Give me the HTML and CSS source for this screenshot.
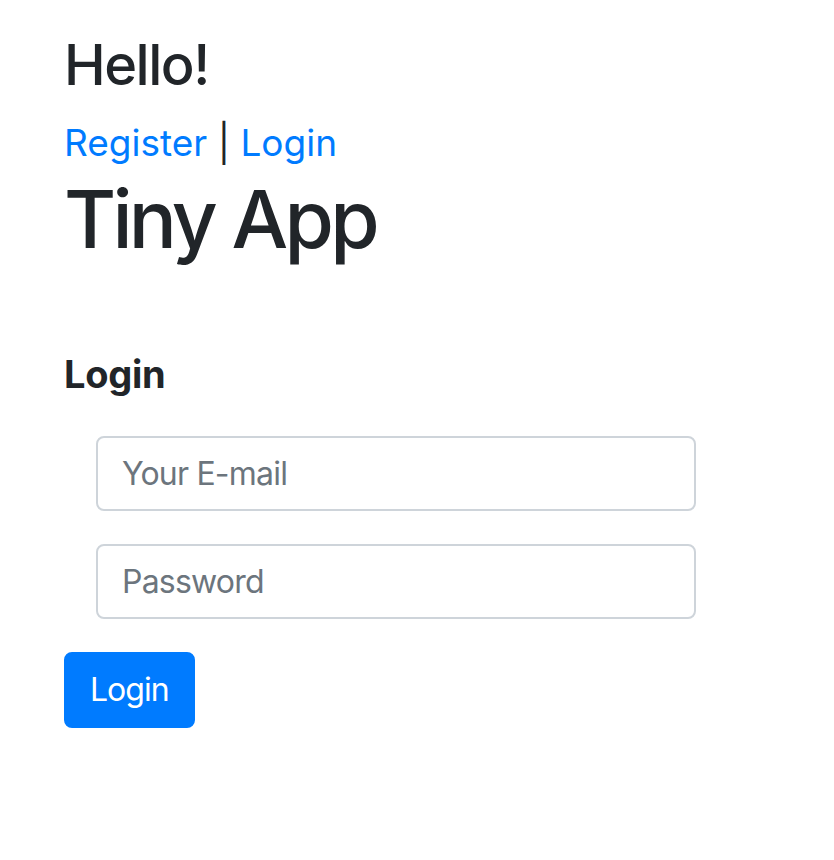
FILE: index.html
```html
<!DOCTYPE html>
<html>
<head>
<meta charset="utf-8">
<link rel="stylesheet" href="styles.css">
</head>
<body>
<header class="nav">
  <h3 class="hello">Hello!</h3>
  <div class="links"><a href="#">Register</a> | <a href="#">Login</a></div>
</header>
<h1 class="title">Tiny App</h1>
<main class="login">
  <h5 class="login-title">Login</h5>
  <form class="form">
    <div class="fields">
      <input class="field" type="email" placeholder="Your E-mail">
      <input class="field" type="password" placeholder="Password">
    </div>
    <button class="btn" type="button">Login</button>
  </form>
</main>
</body>
</html>
```

FILE: styles.css
```css
* { box-sizing: border-box; }
html, body { margin: 0; background: #fff; }
body {
  padding: 32px 64px 0 64px;
  font-family: Inter, "Noto Sans", "Liberation Sans", sans-serif;
  font-size: 32px;
  line-height: 1.5;
  color: #212529;
}
h1, h3, h5 { margin: 0; font-weight: 500; line-height: 1.2; }
.hello { font-size: 56px; letter-spacing: -1.5px; margin-bottom: 20px; }
.links { font-size: 37px; line-height: 48px; }
.links a { color: #007bff; text-decoration: none; }
.title { font-size: 80px; letter-spacing: -3.8px; margin-top: 4px; }
.login { margin-top: 85px; }
.login-title { font-size: 38px; font-weight: 700; letter-spacing: -0.3px; }
.form { margin-top: 38px; }
.fields { padding-left: 32px; display: flex; flex-direction: column; gap: 33px; }
.field {
  width: 600px;
  height: 75px;
  padding: 12px 24px;
  font: inherit;
  font-size: 32px;
  letter-spacing: -0.8px;
  color: #495057;
  border: 2px solid #ced4da;
  border-radius: 8px;
  outline: none;
}
.field::placeholder { color: #6c757d; }
.btn {
  margin-top: 33px;
  height: 76px;
  padding: 12px 24px;
  font: inherit;
  font-size: 32px;
  letter-spacing: -1px;
  color: #fff;
  background: #007bff;
  border: 2px solid #007bff;
  border-radius: 8px;
}
```
